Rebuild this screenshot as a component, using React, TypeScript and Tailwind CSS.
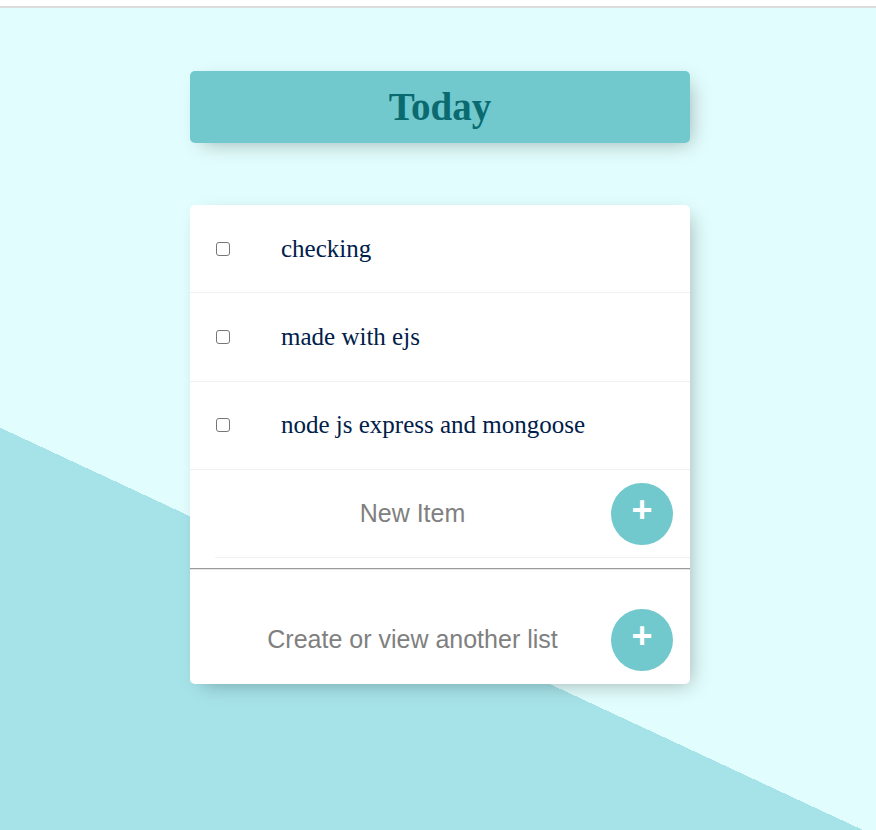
import { useState } from "react";

const ITEMS = ["checking", "made with ejs", "node js express and mongoose"];

function PlusButton() {
  return (
    <button
      type="button"
      className="ml-[1px] flex h-[62px] w-[62px] shrink-0 items-center justify-center rounded-full bg-[#71C9CE] pb-[7px] font-['Liberation_Sans',Arial,sans-serif] text-[36px] font-bold leading-none text-white"
    >
      +
    </button>
  );
}

export default function App() {
  const [done, setDone] = useState<boolean[]>(ITEMS.map(() => false));
  const [newItem, setNewItem] = useState("");
  const [listName, setListName] = useState("");

  return (
    <div className="flex h-screen w-full flex-col overflow-hidden">
      {/* top strip */}
      <div className="h-[6px] bg-white" />
      <div className="h-[2px] bg-[#dcdcdc]" />

      {/* page */}
      <div className="flex-1 bg-[linear-gradient(25deg,#A6E3E9_32.7%,#E2FDFD_32.7%)] font-['Liberation_Serif','Times_New_Roman',serif]">
        <div className="ml-[190px] w-[500px]">
          {/* heading */}
          <div className="mt-[63px] flex h-[72px] items-center justify-center rounded-[5px] bg-[#71C9CE] shadow-[6px_6px_19px_-6px_rgba(0,0,0,0.3)]">
            <h1 className="text-[39px] font-bold text-[#0a6a70]">Today</h1>
          </div>

          {/* list */}
          <div className="mt-[62px] rounded-[5px] bg-white shadow-[6px_6px_19px_-6px_rgba(0,0,0,0.3)]">
            {ITEMS.map((item, i) => (
              <div
                key={item}
                className="flex h-[88.3px] items-center border-b border-[#f1f1f1]"
              >
                <input
                  type="checkbox"
                  checked={done[i]}
                  onChange={() =>
                    setDone((d) => d.map((v, j) => (j === i ? !v : v)))
                  }
                  className="ml-[26px] h-[14px] w-[14px] shrink-0 appearance-none rounded-[3px] border border-[#767676] bg-white"
                />
                <p
                  className={`ml-[51px] text-[25px] text-[#00204a] ${
                    done[i] ? "line-through decoration-[#71C9CE]" : ""
                  }`}
                >
                  {item}
                </p>
              </div>
            ))}

            {/* new item form */}
            <form
              onSubmit={(e) => e.preventDefault()}
              className="ml-[25px] flex h-[88.3px] items-center border-b border-[#f1f1f1]"
            >
              <input
                type="text"
                value={newItem}
                onChange={(e) => setNewItem(e.target.value)}
                placeholder="New Item"
                autoComplete="off"
                className="h-[60px] w-[395px] bg-transparent text-center font-['Liberation_Sans',Arial,sans-serif] text-[25px] text-[#00204a] outline-none placeholder:text-[#808080]"
              />
              <PlusButton />
            </form>

            <div className="mt-[10px] h-[2px] border-t border-[#9a9a9a] bg-[#e6e6e6]" />

            {/* another list */}
            <form
              onSubmit={(e) => e.preventDefault()}
              className="ml-[25px] mt-[25px] flex h-[89px] items-center"
            >
              <input
                type="text"
                value={listName}
                onChange={(e) => setListName(e.target.value)}
                placeholder="Create or view another list"
                autoComplete="off"
                className="h-[60px] w-[395px] bg-transparent text-center font-['Liberation_Sans',Arial,sans-serif] text-[25px] text-[#00204a] outline-none placeholder:text-[#808080]"
              />
              <PlusButton />
            </form>
          </div>
        </div>
      </div>
    </div>
  );
}
